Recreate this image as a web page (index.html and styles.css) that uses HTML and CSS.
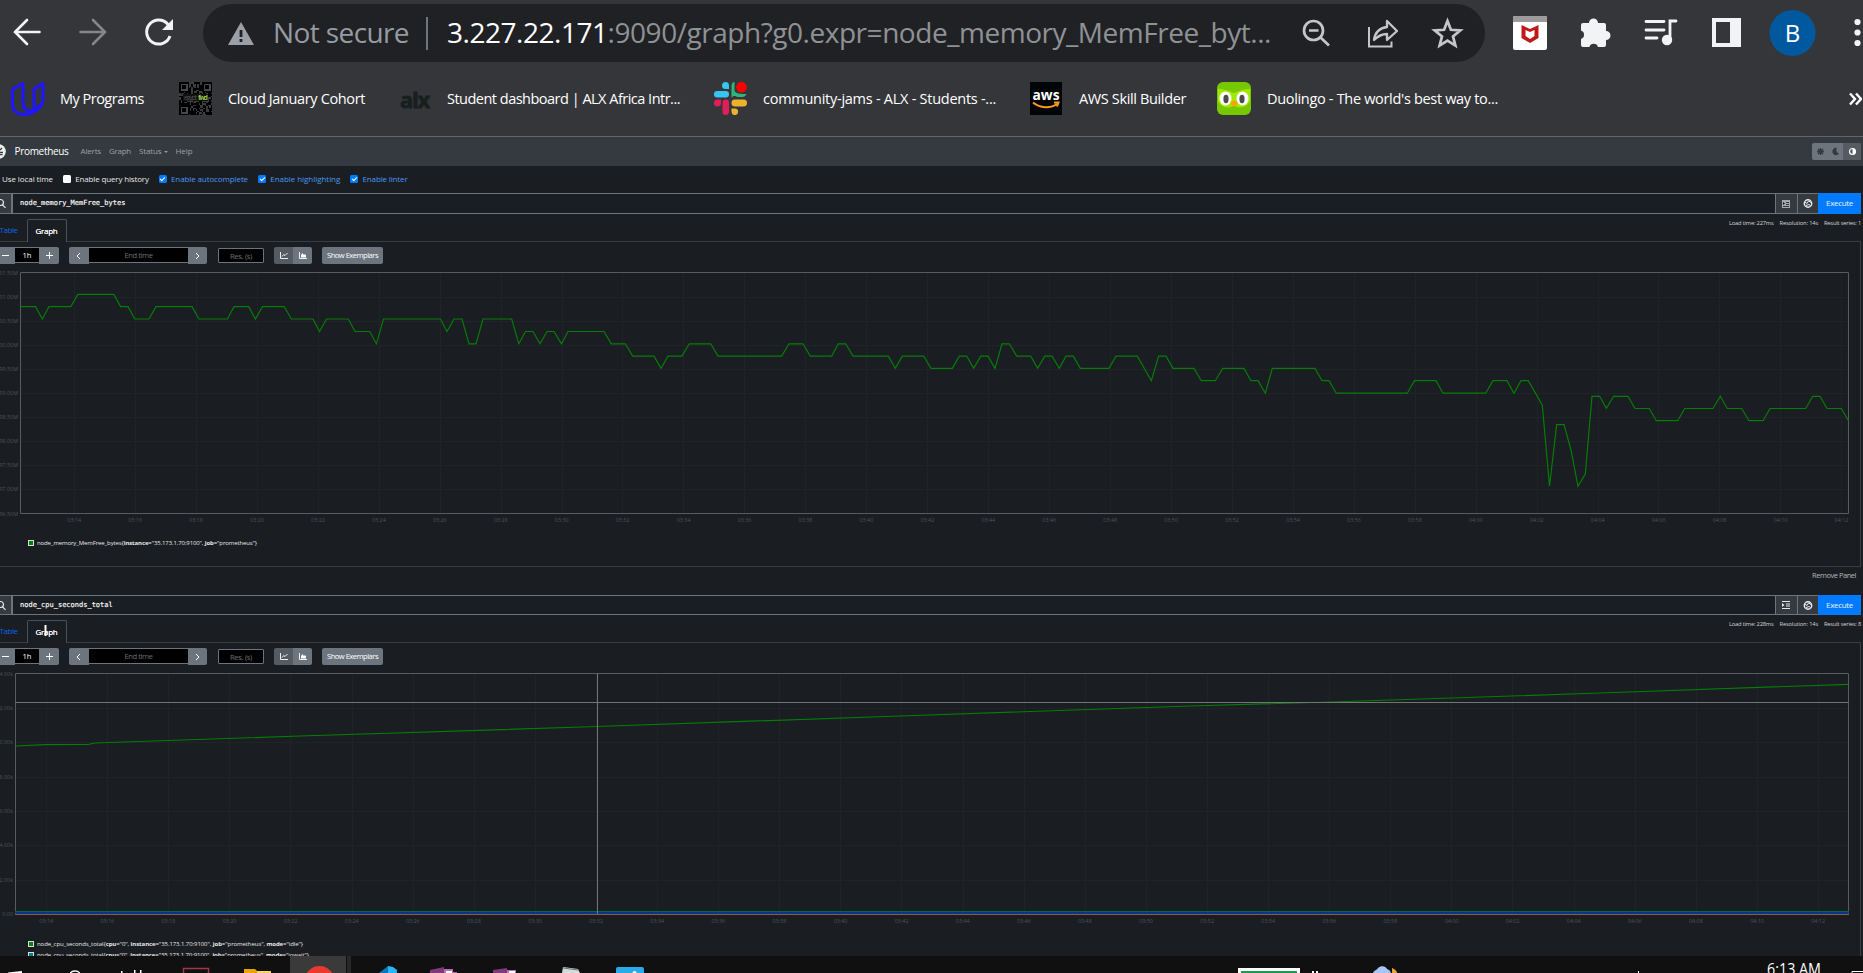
FILE: index.html
```html
<!DOCTYPE html>
<html lang="en">
<head>
<meta charset="utf-8">
<title>Prometheus Time Series Collection and Processing Server</title>
<link rel="stylesheet" href="styles.css">
</head>
<body>
<div class="screen">
  <header class="browser">
    <div class="toolbar">
      <svg class="nav-icons" width="203" height="64" viewBox="0 0 203 64" fill="none" stroke-linecap="round">
        <g stroke-width="2.6"><path stroke="#f1f3f4" d="M39.5 32H15M27 20L15 32L27 44"/><path stroke="#85868a" d="M80.500 32H105M93 20L105 32L93 44"/></g>
        <path stroke="#f1f3f4" stroke-width="3" stroke-linecap="butt" d="M168 24.500A12 12 0 1 0 170 36"/><path fill="#f1f3f4" d="M173 19V30H162Z"/>
      </svg>
      <div class="omnibox">
        <svg class="warn" width="26" height="24" viewBox="0 0 26 24"><path fill="#9aa0a6" d="M13 0L26 23H0Z"/><path stroke="#202124" stroke-width="2.800" d="M13 8v7M13 17v3"/></svg>
        <span class="not-secure" data-w="136">Not secure</span>
        <i class="divider"></i>
        <span class="url" data-w="824"><b>3.227.22.171</b>:9090/graph?g0.expr=node_memory_MemFree_byt...</span>
        <svg class="omni-icons" width="170" height="34" viewBox="1300 15 170 34" fill="none" stroke="#c4c6c9" stroke-width="2.700">
          <circle cx="1313.500" cy="29.500" r="9.500"/><path d="M1309 29.500h9.500M1320 36l9 8.500" /><path d="M1369 26v19.500h22.500v-5" stroke-width="2"/><path stroke-width="2.300" stroke-linejoin="round" d="M1374 39c1-8 6-12 13-13v-6l10 10-10 9v-6c-6 0-9 2-13 6z"/>
          <path stroke-linejoin="miter" d="M1447.500 20l3.400 8.800 9.400.6-7.300 6 2.400 9.200-7.900-5.100-7.900 5.100 2.400-9.200-7.300-6 9.400-.6z"/>
        </svg>
      </div>
      <svg class="ext-icons" width="378" height="64" viewBox="1485 0 378 64">
        <rect x="1513" y="16" width="34" height="34" rx="2" fill="#fff"/><path fill="#9d9a9b" d="M1513 18a2 2 0 0 1 2-2h30a2 2 0 0 1 2 2v4h-34z"/>
        <path fill="#c01818" d="M1521.500 25l8.500 4 8.500-4v13l-8.500 5-8.500-5zM1525.500 30v6l4.500 3 4.500-3v-6l-4.500 2z" fill-rule="evenodd"/>
        <path fill="#f1f3f4" d="M1583 23h6a4.500 4.500 0 0 1 9 0h6a2 2 0 0 1 2 2v6a4.500 4.500 0 0 1 0 9v5a2 2 0 0 1-2 2h-6a4.500 4.500 0 0 0-8.600 0h-6.400a2 2 0 0 1-2-2v-6a4.500 4.500 0 0 0 0-8.500v-5.500a2 2 0 0 1 2-2z"/>
        <path stroke="#f1f3f4" stroke-width="2.800" stroke-linecap="round" fill="none" d="M1646 21.500h18M1646 30h18M1646 38h11M1670 39V21h6"/><circle cx="1667" cy="40" r="5.200" fill="#f1f3f4"/>
        <path fill="#f1f3f4" fill-rule="evenodd" d="M1712 18h29v29h-29zM1716 22v21h14V22z"/>
        <circle cx="1792.500" cy="33" r="23" fill="#00589f"/><text x="1792.500" y="41.500" text-anchor="middle" class="avatar-letter">B</text>
        <g fill="#f1f3f4"><circle cx="1857.500" cy="22" r="3.100"/><circle cx="1857.500" cy="32.500" r="3.100"/><circle cx="1857.500" cy="43" r="3.100"/></g>
      </svg>
    </div>
    <nav class="bookmarks">
      <a class="bm bm1"><svg width="34" height="34" viewBox="0 0 34 34" fill="none" stroke="#2015ff" stroke-width="3" stroke-linejoin="round"><path d="M12 1.500L1.500 7v15c0 7 5 10.500 11 10.500C22 32 32 26 32 17V1.500L23 7v17c0 3 0 5-3 5c-6 0-8-4-8-9z"/><path d="M23 28l8-6"/></svg><span data-w="84">My Programs</span></a>
      <a class="bm bm2"><svg id="qr" width="33" height="33" viewBox="0 0 33 33" shape-rendering="crispEdges"></svg><span data-w="137">Cloud January Cohort</span></a>
      <a class="bm bm3"><b class="alx" data-w="29">alx</b><span data-w="233">Student dashboard | ALX Africa Intr...</span></a>
      <a class="bm bm4"><svg width="33" height="33" viewBox="0 0 33 33"><g fill="#36c5f0"><path d="M8 3.500a3.500 3.500 0 0 1 7 0V7h-3.500A3.500 3.500 0 0 1 8 3.500z"/><rect y="9" width="15" height="6.500" rx="3.200"/></g><path fill="#2eb67d" d="M17.500 15.500V4c0-2 1-4 3-4v9c2 3 6 3 12 3-1 2-2 3-4 3h-5c-2-1-3-2-6 .500z"/><g fill="#e01e5a"><path d="M0 21a3.500 3.500 0 0 1 3.500-3.500H7V21a3.500 3.500 0 0 1-7 0z"/><rect x="8.500" y="17.500" width="6.500" height="15.500" rx="3.200"/></g><g fill="#ecb22e"><rect x="17.500" y="17.500" width="15.500" height="7" rx="3.400"/><path d="M17.500 26.500H21a3.300 3.300 0 1 1-3.500 3.300z"/></g><circle cx="27.500" cy="5.200" r="5.300" fill="red"/></svg><span data-w="233">community-jams - ALX - Students -...</span></a>
      <a class="bm bm5"><svg width="32" height="33" viewBox="0 0 32 33"><rect width="32" height="33" fill="#020507"/><text x="16" y="18" text-anchor="middle" textLength="27" lengthAdjust="spacingAndGlyphs" class="aws">aws</text><path d="M3 20.500c7 6 18 6 24 1.500M24 20.500h4.500l-1.500 4" fill="none" stroke="#f79a22" stroke-width="2"/></svg><span data-w="107">AWS Skill Builder</span></a>
      <a class="bm bm6"><svg width="34" height="33" viewBox="0 0 34 33"><rect width="34" height="33" rx="6" fill="#78c800"/><path fill="#a0e800" d="M1 7c6 0 11 2 16 4 5-2 10-4 16-4v12c-3 7-12 8-16 4-4 4-13 3-16-4z"/><ellipse cx="8.500" cy="16.500" rx="6" ry="7" fill="#fff"/><ellipse cx="25.500" cy="16.500" rx="6" ry="7" fill="#fff"/><ellipse cx="9" cy="17" rx="2.600" ry="4.200" fill="#4b4b4b"/><ellipse cx="25" cy="17" rx="2.600" ry="4.200" fill="#4b4b4b"/><path fill="#ffa200" d="M13 21c2-3 6-3 8 0l-4 4z"/></svg><span data-w="231">Duolingo - The world's best way to...</span></a>
      <svg class="more" width="13" height="14" viewBox="0 0 13 14" fill="none" stroke="#fff" stroke-width="2.400"><path d="M1 1.500l5 5.500-5 5.500M7 1.500l5 5.500-5 5.500"/></svg>
    </nav>
  </header>

  <div class="navbar">
    <svg width="6" height="15" viewBox="0 0 6 15"><circle cx="-1.500" cy="7.500" r="7.300" fill="#eee"/><path stroke="#343a40" stroke-width="1.300" d="M0 8.500h3M0 10.700h2.500M0 6l2-2" fill="none"/></svg>
    <a class="brand" data-w="54">Prometheus</a>
    <a class="n-alerts" data-w="20.500">Alerts</a><a class="n-graph" data-w="22">Graph</a><a class="n-status" data-w="22.500">Status</a><i class="caret"></i><a class="n-help" data-w="17">Help</a>
    <div class="themes">
      <svg width="49" height="17" viewBox="0 0 49 17"><rect width="49" height="17" rx="2" fill="#6c757d"/><path fill="#545b62" d="M31 0h16a2 2 0 0 1 2 2v13a2 2 0 0 1-2 2H31z"/><path stroke="#343a40" stroke-width="1.400" d="M8.500 5v7M5 8.500h7M6 6l5 5M11 6l-5 5"/><path fill="#343a40" d="M25 5a3.600 3.600 0 1 0 2 5.500A3.500 3.500 0 0 1 25 5z"/><circle cx="40.500" cy="8.500" r="3" fill="none" stroke="#fff" stroke-width="1.200"/><path fill="#fff" d="M40.500 5.500a3 3 0 0 1 0 6z"/></svg>
    </div>
  </div>

  <div class="options">
    <span class="o1" data-w="51">Use local time</span>
    <i class="cb off"></i><span class="o2" data-w="73.500">Enable query history</span>
    <i class="cb"></i><span class="on o3" data-w="77">Enable autocomplete</span>
    <i class="cb"></i><span class="on o4" data-w="70">Enable highlighting</span>
    <i class="cb"></i><span class="on" data-w="45">Enable linter</span>
  </div>

  <main id="panels"></main>

  <footer class="taskbar">
    <svg width="1863" height="17" viewBox="0 956 1863 17">
      <path fill="#3a3a3a" d="M290 956h56v17h-56z"/><path fill="#282828" d="M347 956h4v17h-4z"/>
      <path fill="#fff" d="M8 972.500l14-1.500v2H8zM121 971h1.500v2H121zM134 970h1.500v3H134zM140 970h1.500v3H140z"/><path d="M70.500 973a5 3.500 0 0 1 9 0" fill="none" stroke="#fff" stroke-width="1.500"/>
      <path d="M183.500 973v-4.500h25v4.500" fill="none" stroke="#a03546" stroke-width="1.500"/>
      <path fill="#e8a400" d="M244 969h11l2 2v2h-13z"/><path fill="#ffd45e" d="M257 971h14v2h-14z"/>
      <circle cx="319.500" cy="981" r="15" fill="#e83b2e"/>
      <path fill="#0b76bd" d="M379 973l9-7v7z"/><path fill="#29b6f6" d="M388 966l5 1 4 3v3h-9z"/>
      <path fill="#80397b" d="M430 970l14-3v6h-14zM493 970l14-2v5h-14z"/><path fill="#b86db4" d="M444 969h9v3h4v1h-13zM507 970h9v3h-9z"/><path fill="#fff" d="M446 971h6v2h-6zM509 971h6v2h-6z"/>
      <path fill="#cfdcda" d="M563 967l15 2 2 4h-18z"/><path stroke="#69736f" d="M563 968l15 2"/><path fill="#2aabe8" d="M616 969a2 2 0 0 1 2-2h24a2 2 0 0 1 2 2v4h-28z"/><circle cx="634.500" cy="973" r="2" fill="#fff"/>
      <path fill="#fff" d="M1238 968h62v5h-62zM1312 971h2v2h-2zM1316 971h2v2h-2zM1638 971h1v2h-1z"/><path fill="#1d9a4c" d="M1241 971h56v2h-56z"/>
      <path fill="#a9c5f5" d="M1373 973c1-3 4-3 5-5 3-3 8-2 9 1 3 1 3 2 4 4z"/><path fill="#eda435" d="M1392 968c3 1 5 3 5 5h-5z"/>
      <text x="1767" y="975" textLength="54" lengthAdjust="spacingAndGlyphs" class="clock">6:13 AM</text>
      <path d="M1852 973v-1.500h11" fill="none" stroke="#fff"/>
    </svg>
  </footer>
</div>
<template id="panel">
  <section class="panel">
    <div class="expr">
      <span class="search"><svg width="6" height="11" viewBox="0 0 6 11" fill="none" stroke="#e6e8ea" stroke-width="1.200"><circle cx="0.500" cy="4.500" r="3"/><path d="M2.500 6.800l3 3"/></svg></span>
      <code></code>
      <span class="tool"><svg class="tree" width="8" height="8" viewBox="0 0 8 8"></svg></span>
      <span class="tool"><svg width="10" height="9" viewBox="0 0 10 9" fill="none" stroke="#e9ecef" stroke-width="1.400"><circle cx="5" cy="4.500" r="3.700"/><path d="M1.500 3l2.500 1.500L5.500 2 8 3.500M3 6.500l3-1 1.500 1" stroke-width="1"/></svg></span>
      <span class="execute"><span data-w="27">Execute</span></span>
    </div>
    <div class="tabs">
      <span class="t-table" data-w="18">Table</span>
      <span class="t-graph"><span data-w="22">Graph</span></span>
      <div class="stats"><span class="s-load" data-w="44.500"></span><span data-w="38.500">Resolution: 14s</span><span class="s-res" data-w="37"></span></div>
    </div>
    <div class="content">
      <div class="controls">
        <span class="btn minus"><svg width="7" height="7" viewBox="0 0 7 7"><path d="M0 3.500h7" stroke="#fff"/></svg></span><span class="inp range">1h</span><span class="btn plus"><svg width="7" height="7" viewBox="0 0 7 7"><path d="M0 3.500h7M3.500 0v7" stroke="#fff"/></svg></span>
        <span class="btn prev"><svg width="5" height="8" viewBox="0 0 5 8" fill="none" stroke="#fff"><path d="M4 1L1 4l3 3"/></svg></span><span class="inp end"><span data-w="28">End time</span></span><span class="btn next"><svg width="5" height="8" viewBox="0 0 5 8" fill="none" stroke="#fff"><path d="M1 1l3 3-3 3"/></svg></span>
        <span class="inp res"><span data-w="22">Res. (s)</span></span>
        <span class="btn line"><svg width="8" height="7" viewBox="0 0 8 7" fill="none" stroke="#fff" stroke-width=".9"><path d="M.5 0v6.500H8M2 4.500l1.700-2 1.300 1L7.500 1"/></svg></span><span class="btn stack"><svg width="8" height="7" viewBox="0 0 8 7"><path d="M.5 0v6.500H8" fill="none" stroke="#fff" stroke-width=".9"/><path fill="#fff" d="M2 5.500V3l1.500-2L5 3l1-1 1 1.500v2z"/></svg></span>
        <span class="btn exemplars"><span data-w="51">Show Exemplars</span></span>
      </div>
      <svg class="chart" width="1860" height="270"></svg>
      <div class="legend"></div>
    </div>
    <div class="remove"><span data-w="44">Remove Panel</span></div>
  </section>
</template>
<svg class="ibeam" width="3" height="11" viewBox="0 0 3 11"><path d="M1.500 0v11" stroke="#fff" stroke-width="2"/></svg>
<script src="app.js"></script>
</body>
</html>
```
FILE: styles.css
```css
* { box-sizing: border-box; }
body { margin: 0; background: #1a1d21; font-family: "Open Sans", "Noto Sans", sans-serif; overflow: hidden; }
.screen { width: 1863px; height: 973px; overflow: hidden; display: flex; flex-direction: column; }
[data-w] { display: inline-block; white-space: pre; flex: none; }
svg { display: block; flex: none; }

.browser { height: 137px; flex: none; background: #35363a; border-bottom: 1px solid #62666a; color: #fff; }
.toolbar { display: flex; height: 64px; }
.omnibox { width: 1282px; height: 58px; margin-top: 4px; border-radius: 29px; background: #202124; display: flex; align-items: center; padding-left: 25px; font-size: 28px; color: #969ba1; }
.warn { margin-top: 1px; }
.not-secure { margin-left: 19px; padding-bottom: 2px; }
.divider { width: 2px; height: 33px; background: #70757a; margin-left: 17px; }
.url { margin-left: 19px; padding-bottom: 2px; color: #8f9295; }
.url b { color: #fff; font-weight: 400; }
.omni-icons { margin-left: 29px; }
.avatar-letter { font-size: 24px; fill: #fff; }
.bookmarks { display: flex; height: 69px; align-items: center; font-size: 14.5px; }
.bm { display: flex; align-items: center; }
.bm span { padding-bottom: 1px; }
.bm1 { margin-left: 11px; gap: 15px; }
.bm2 { margin-left: 35px; gap: 16px; }
.bm3 { margin-left: 35px; gap: 18px; }
.bm4 { margin-left: 34px; gap: 16px; }
.bm5 { margin-left: 34px; gap: 17px; }
.bm6 { margin-left: 31px; gap: 16px; }
.alx { color: #16201f; font: 700 22px/24px "Open Sans", sans-serif; -webkit-text-stroke: .8px #16201f; }
.aws { fill: #fff; font: 700 14px "Open Sans", sans-serif; }
.more { margin-left: auto; margin-right: 1px; }

.navbar { height: 29px; flex: none; background: #343a40; display: flex; align-items: center; font-size: 8px; color: #9da0a4; }
.navbar a { padding-bottom: 2px; }
.brand { margin-left: 8.500px; font-size: 10px; color: #fff; }
.n-alerts { margin-left: 12px; }
.n-graph { margin-left: 8px; }
.n-status { margin-left: 8px; }
.caret { margin-left: 2px; border: 2px solid transparent; border-top-color: #989b9f; border-bottom: 0; }
.n-help { margin-left: 8px; }
.themes { margin-left: auto; margin-right: 2px; }

.options { height: 27px; flex: none; display: flex; align-items: center; font-size: 8px; color: #e8e8e8; padding-left: 2px; }
.options span { padding-bottom: 2px; }
.cb { width: 8px; height: 8px; border-radius: 1.500px; background: #007bff; margin: 0 4.250px 1px 10px; display: grid; place-items: center; }
.cb::after { content: ""; width: 4px; height: 2px; border: solid #fff; border-width: 0 0 1px 1px; rotate: -45deg; margin-bottom: 1px; }
.off { background: #fff; }
.off::after { display: none; }
.on { color: #4a98f2; }

.panel { width: 1861px; }
.expr { height: 21px; display: flex; border: 1px solid #6c757d; border-left: 0; border-right: 0; }
.panel:nth-child(2) .expr { height: 20px; }
.search { width: 13px; background: #343a40; border-right: 2px solid #6c757d; display: flex; align-items: center; }
.expr code { flex: 1; padding-left: 7px; color: #fff; font: 7px/18px "DejaVu Sans Mono", monospace; -webkit-text-stroke: .15px #fff; }
.tool { width: 21.500px; background: #343a40; border-left: 1px solid #6c757d; display: grid; place-items: center; }
.execute { width: 43px; margin: -1px 0; background: #007bff; color: #e8f3ff; border-radius: 0 2px 2px 0; display: grid; place-items: center; font-size: 8px; }
.execute span { padding-bottom: 2px; }
.tabs { height: 28px; display: flex; font-size: 8px; border-bottom: 1px solid #383d42; }
.t-table { margin: 10px 9px 0 -.500px; color: #0867e8; line-height: 11px; }
.t-graph { width: 40px; height: 23px; margin-top: 5px; border: 1px solid #495057; border-bottom: 0; border-radius: 2px 2px 0 0; background: #1a1d21; color: #fff; display: grid; place-items: center; }
.t-graph span { padding-bottom: 2px; text-shadow: 0 0 .500px #fff; }
.stats { margin-left: auto; display: flex; gap: 6px; font-size: 5.700px; line-height: 10px; padding-top: 4px; color: #d4d6d8; }
.content { height: 325px; border-right: 1px solid #383d42; border-bottom: 1px solid #383d42; }
.controls { height: 22px; padding-top: 5px; display: flex; font-size: 7.600px; color: #fff; }
.btn { background: #6c757d; height: 17px; display: grid; place-items: center; }
.inp { background: #000; height: 16px; border: 1px solid #6c757d; border-left: 0; border-right: 0; display: grid; place-items: center; color: #6c7074; }
.minus { width: 15px; padding-right: 4px; }
.range { width: 24px; color: #fff; }
.plus { width: 20px; border-radius: 0 2px 2px 0; }
.prev { width: 20px; margin-left: 10px; padding-right: 2px; border-radius: 2px 0 0 2px; }
.end { width: 99px; }
.next { width: 19px; border-radius: 0 2px 2px 0; }
.res { width: 46px; margin: 1px 10px 0 11px; border: 1px solid #6c757d; border-radius: 1px; height: 15px; }
.line { width: 19px; background: #545b62; border-radius: 2px 0 0 2px; }
.stack { width: 19px; border-radius: 0 2px 2px 0; }
.exemplars { width: 61px; margin-left: 10px; border-radius: 2px; }
.exemplars span { padding-bottom: 1px; }
.legend { padding: 3px 0 0 28px; font-size: 6px; color: #e8e8e8; }
.entry { height: 11px; display: flex; align-items: center; gap: 3px; }
.swatch { width: 6px; height: 6px; border: 1px solid #ddd; }
.remove { height: 28px; padding: 1px 5px 0 0; text-align: right; font-size: 7.500px; line-height: 14px; color: #b4b6b9; }
.chart text { font-size: 5.400px; fill: #505458; }
.grid { stroke: #202428; stroke-width: 1; }
.frame { fill: none; stroke: #5a5b5c; stroke-width: 1; }
.series { fill: none; stroke: #067d06; stroke-width: 1.200; }
.cross { stroke: #737476; stroke-width: 1; }

.ibeam { position: absolute; left: 44px; top: 625px; }
#panels { height: 763px; flex: none; overflow: hidden; }
.taskbar { height: 17px; flex: none; background: #101010; }
.clock { font-size: 16px; fill: #fff; }
```
FILE: app.js
```js
// Height levels shared by the free-memory samples.
const L = [294.4, 306.6, 319, 331.5, 343.8, 356.1, 368.4, 380.7, 393.2];
// [x, level] pairs while the value moves between levels.
const steps = [[20.6,1],[35.6,1],[42.3,2],[49,1],[70.8,1],[77.9,0],[113.9,0],[120.6,1],[128,1],[134.8,2],[149,2],[156,1],[192,1],[199,2],[227.4,2],[234,1],[248.7,1],[255.4,2],[262.5,1],[284.3,1],[291.4,2],[313,2],[319.5,3],[326.6,2],[348.4,2],[355,3],[369.7,3],[376.4,4],[383.5,2],[440.5,2],[447,3],[454,2],[462,2],[469,4],[476,4],[483,2],[511.7,2],[518.8,4],[525.5,3],[533,3],[540,4],[547,3],[554,3],[561.5,4],[568,3],[604,3],[611.3,4],[625.3,4],[632.7,5],[654,5],[661,6],[668,5],[682,5],[689.3,4],[710.7,4],[718,5],[781.7,5],[789,4],[803,4],[810.3,5],[831.7,5],[838.3,4],[845.7,4],[853,5],[888.3,5],[895.3,6],[902.3,5],[923.7,5],[931,6],[952.3,6],[959.3,5],[966.7,5],[973.7,6],[980.7,5],[988,5],[995,6],[1002,4],[1009.3,4],[1016.7,5],[1030.7,5],[1037.7,6],[1044.7,5],[1052,5],[1059.3,6],[1066,5],[1073.3,5],[1080.3,6],[1109,6],[1116,5],[1137.3,5],[1151.3,7],[1158.7,5],[1166,5],[1173,6],[1194,6],[1201.3,7],[1215.3,7],[1222.7,6],[1244,6],[1251,7],[1258,7],[1265.3,8],[1272.3,6],[1315,6],[1322,7],[1329,7],[1336.3,8],[1407.3,8],[1414.5,7],[1436,7],[1443,8],[1485.7,8],[1493,7],[1507,7],[1514,8],[1521,7],[1528.3,7]];
const tail = [[1542.3,405.3],[1549.5,486],[1556.7,424.7],[1564,424.7],[1571,450],[1578,486.3],[1585.3,474],[1592,396.3],[1599.7,396.3],[1606.3,408.3],[1613.7,396.3],[1628,396.3],[1635,408.5],[1649.3,408.5],[1656.3,420.7],[1677.7,420.7],[1684.7,408.5],[1713,408.5],[1720.3,396.3],[1727.3,408.5],[1741.7,408.5],[1749,420.7],[1763,420.7],[1770,408.5],[1805.7,408.5],[1812.7,396.3],[1820,396.3],[1827,408.5],[1841.3,408.5],[1848.5,420.7]];
const memory = steps.map(([x, l]) => [x, L[l]]).concat(tail);
const cpu = [[15.5,746],[45,744.7],[88,744.5],[95,743],[300,736],[597,726.5],[900,716],[1190,706],[1332,702],[1600,693],[1848.5,684.3]];

const panels = [
  { expr: 'node_memory_MemFree_bytes', load: 227, count: 1, origin: 264, left: 20.5, top: 272.5, rows: 10, rowH: 24.1,
    icon: '<path fill="#a5a9ad" d="M0 0h8v8H0z"/><path stroke="#343a40" d="M4 2.500h3M4 4.500h3M1 6.500h6"/><path fill="#111" d="M1 2l2 1.500L1 5z"/>',
    labels: [...Array(11)].map((_, i) => (101.5 - i / 2).toFixed(2) + 'M'), firstX: 74.5, dx: 60.94, series: memory,
    legend: [['#008000', 220, 'node_memory_MemFree_bytes{<b>instance</b>="35.173.1.70:9100", <b>job</b>="prometheus"}']] },
  { expr: 'node_cpu_seconds_total', load: 228, count: 8, origin: 665, left: 15.5, top: 673.5, rows: 7, rowH: 34.36,
    icon: '<path stroke="#e4e6e8" d="M0 .5h8M4 3h4M4 5h4M0 7.500h8"/><path fill="#e4e6e8" d="M0 2l2.500 2L0 6z"/>',
    labels: [...Array(8)].map((_, i) => i === 7 ? '0.00' : (14 - 2 * i).toFixed(2) + 'k'), firstX: 46.5, dx: 61.1, series: cpu, cross: true,
    legend: ['idle', 'iowait'].map((m, i) => [i ? '#008080' : '#008000', i ? 272 : 266,
      `node_cpu_seconds_total{<b>cpu</b>="0", <b>instance</b>="35.173.1.70:9100", <b>job</b>="prometheus", <b>mode</b>="${m}"}`]) }
];

function drawChart(svg, p) {
  const bottom = p.top + p.rows * p.rowH, right = 1848.5;
  svg.setAttribute('viewBox', `0 ${p.origin} 1860 270`);
  let out = '<g class="grid">';
  for (let i = 1; i < p.rows; i++) { const y = Math.round(p.top + i * p.rowH) + .5; out += `<path d="M${p.left} ${y}H${right}"/>`; }
  for (let i = 0; i < 30; i++) { const x = Math.floor(p.firstX + i * p.dx) + .5; out += `<path d="M${x} ${p.top}V${bottom}"/>`; }
  out += '</g>';
  p.labels.forEach((t, i) => { out += `<text x="${p.left - 2.5}" y="${p.top + i * p.rowH + 2}" text-anchor="end">${t}</text>`; });
  for (let i = 0; i < 30; i++) {
    const m = 14 + 2 * i, t = `0${3 + Math.floor(m / 60)}:${String(m % 60).padStart(2, '0')}`;
    out += `<text x="${p.firstX + i * p.dx - .3}" y="${bottom + 8.5}" text-anchor="middle">${t}</text>`;
  }
  out += `<path class="frame" d="M${p.left} ${p.top}H${right}V${Math.floor(bottom) + .5}H${p.left}Z"/>`;
  out += `<polyline class="series" points="${p.series.join(' ')}"/>`;
  if (p.cross) {
    out += '<path stroke="#05684b" stroke-width="1.200" d="M15 911.500H1849"/><path stroke="#0b3aa8" stroke-width="1.600" d="M15 913H1849"/><path stroke="#80614b" d="M15 914.500H1849"/>';
    out += `<path class="cross" d="M597.500 ${p.top}V914M${p.left} 702.500H${right}"/>`;
  }
  svg.innerHTML = out;
}

const host = document.getElementById('panels'), tpl = document.getElementById('panel');
for (const p of panels) {
  const el = tpl.content.cloneNode(true), q = s => el.querySelector(s);
  q('code').textContent = p.expr;
  q('.tree').innerHTML = p.icon;
  q('.s-load').textContent = `Load time: ${p.load}ms`;
  q('.s-res').textContent = `Result series: ${p.count}`;
  q('.legend').innerHTML = p.legend.map(([c, w, t]) =>
    `<div class="entry"><i class="swatch" style="background:${c}"></i><span data-w="${w}">${t}</span></div>`).join('');
  drawChart(q('.chart'), p);
  host.append(el);
}

// QR-style favicon: three finder squares plus a fixed dot pattern.
let qr = '<rect width="33" height="33" fill="#3b3c3f"/><g fill="#000">', seed = 7;
for (let y = 0; y < 22; y++) for (let x = 0; x < 22; x++) { seed = (seed * 1103 + 12345) % 65536; if (seed % 100 < 62) qr += `<rect x="${x * 1.5}" y="${y * 1.5}" width="1.500" height="1.500"/>`; }
for (const [x, y] of [[0, 0], [23, 0], [0, 23]]) qr += `<path fill="#47484b" d="M${x} ${y}h10v10h-10z"/><path d="M${x} ${y}h10v10h-10zM${x + 1.5} ${y + 1.5}v7h7v-7z" fill-rule="evenodd"/><path d="M${x + 3} ${y + 3}h4v4h-4z"/>`;
document.getElementById('qr').innerHTML = qr + '</g><path fill="#111" d="M4 12h25v7H4z"/><text x="5" y="18" font-size="7" fill="#4c4d4f" textLength="13">egypt</text><text x="19" y="18" font-size="7" font-weight="700" fill="#8fc24a" textLength="10">fwd</text>';

for (const el of document.querySelectorAll('[data-w]')) {
  const w = +el.dataset.w, n = el.textContent.length;
  el.style.letterSpacing = (w - el.getBoundingClientRect().width) / n + 'px';
}
```
